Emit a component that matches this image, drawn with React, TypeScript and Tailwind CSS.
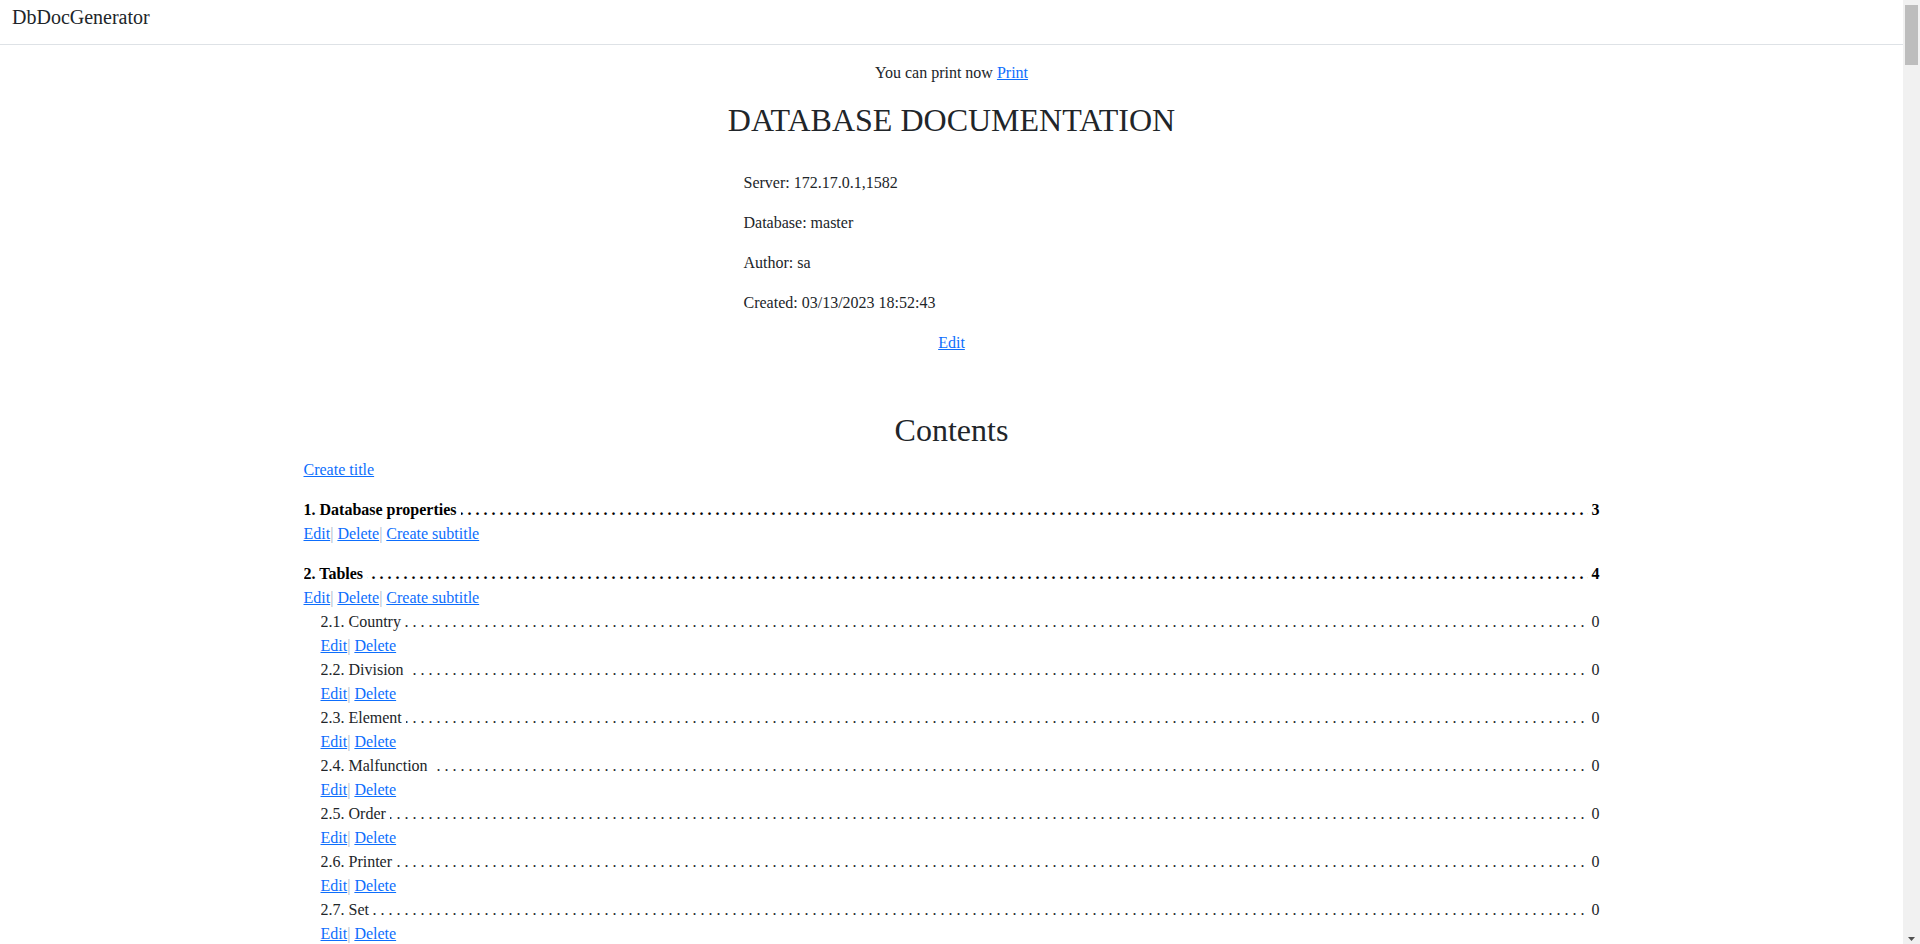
import React from "react";

type SubItem = { title: string; page: number };
type Section = { title: string; page: number; items: SubItem[] };

const sections: Section[] = [
  { title: "1. Database properties", page: 3, items: [] },
  {
    title: "2. Tables",
    page: 4,
    items: [
      { title: "2.1. Country", page: 0 },
      { title: "2.2. Division", page: 0 },
      { title: "2.3. Element", page: 0 },
      { title: "2.4. Malfunction", page: 0 },
      { title: "2.5. Order", page: 0 },
      { title: "2.6. Printer", page: 0 },
      { title: "2.7. Set", page: 0 },
    ],
  },
];

const dots = ". ".repeat(200);

function LeaderRow({ title, page, bold }: { title: string; page: number; bold?: boolean }) {
  return (
    <div className={`relative flex justify-between overflow-hidden whitespace-nowrap leading-6 ${bold ? "font-bold text-black" : ""}`}>
      {/* dot leaders sit behind the title and page number */}
      <span aria-hidden className="absolute top-0 left-1">
        {dots}
      </span>
      <span className="relative bg-white pr-1">{title}</span>
      <span className="relative bg-white pl-1">{page}</span>
    </div>
  );
}

function Sep() {
  return <span className="text-[#a9b6c9]">|</span>;
}

function Link({ children }: { children: React.ReactNode }) {
  return (
    <a href="#" className="text-[#0d6efd] underline">
      {children}
    </a>
  );
}

export default function App() {
  return (
    <div className="flex h-screen overflow-hidden bg-white font-['Liberation_Serif','Times_New_Roman',serif] text-[16px] text-[#212529]">
      <div className="min-w-0 flex-1">
        {/* Navbar */}
        <nav className="h-[45px] border-b border-[#dee2e6] px-3">
          <span className="block pt-[2px] text-[20px] leading-[30px]">DbDocGenerator</span>
        </nav>

        <main className="mx-auto w-[1320px] px-3">
          <p className="mt-4 text-center leading-6">
            You can print now <Link>Print</Link>
          </p>

          <h1 className="mt-4 text-center text-[32px] leading-[1.2]">DATABASE DOCUMENTATION</h1>

          <div className="-mx-3 mt-[32px] grid grid-cols-12">
            <div className="col-span-4 col-start-5 px-3">
              <p className="mb-4 leading-6">Server: 172.17.0.1,1582</p>
              <p className="mb-4 leading-6">Database: master</p>
              <p className="mb-4 leading-6">Author: sa</p>
              <p className="mb-4 leading-6">Created: 03/13/2023 18:52:43</p>
            </div>
          </div>
          <p className="text-center leading-6">
            <Link>Edit</Link>
          </p>

          <h2 className="mt-[56px] mb-2 text-center text-[32px] leading-[1.2]">Contents</h2>
          <p className="leading-6">
            <Link>Create title</Link>
          </p>

          <div className="mt-4 flex flex-col gap-4">
            {sections.map((s) => (
              <div key={s.title}>
                <LeaderRow title={s.title} page={s.page} bold />
                <div className="leading-6">
                  <Link>Edit</Link>
                  <Sep /> <Link>Delete</Link>
                  <Sep /> <Link>Create subtitle</Link>
                </div>
                {s.items.length > 0 && (
                  <div className="pl-[17px]">
                    {s.items.map((it) => (
                      <div key={it.title}>
                        <LeaderRow title={it.title} page={it.page} />
                        <div className="leading-6">
                          <Link>Edit</Link>
                          <Sep /> <Link>Delete</Link>
                        </div>
                      </div>
                    ))}
                  </div>
                )}
              </div>
            ))}
          </div>
        </main>
      </div>

      {/* Scrollbar */}
      <div className="flex w-[17px] shrink-0 flex-col justify-between bg-[#f1f1f1] px-[2px] pt-[5px] pb-[3px]">
        <div className="h-[60px] w-[13px] bg-[#bdbdbd]" />
        <svg width="13" height="4" viewBox="0 0 13 4" className="block">
          <polygon points="3,0 10,0 6.5,4" fill="#505050" />
        </svg>
      </div>
    </div>
  );
}
